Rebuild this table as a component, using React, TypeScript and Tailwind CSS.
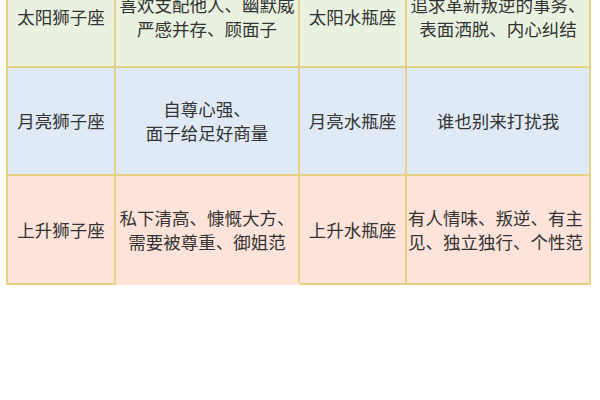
import React from 'react';

const rows = [
  {
    bg: 'bg-[#e9f2e0]',
    h: 'h-[100px]',
    cells: ['太阳狮子座', ['喜欢支配他人、幽默威', '严感并存、顾面子'], '太阳水瓶座', ['追求革新叛逆的事务、', '表面洒脱、内心纠结']],
  },
  {
    bg: 'bg-[#e0eaf6]',
    h: 'h-[108px]',
    cells: ['月亮狮子座', ['自尊心强、', '面子给足好商量'], '月亮水瓶座', ['谁也别来打扰我']],
  },
  {
    bg: 'bg-[#fde3d9]',
    h: 'h-[109px]',
    cells: ['上升狮子座', ['私下清高、慷慨大方、', '需要被尊重、御姐范'], '上升水瓶座', ['有人情味、叛逆、有主', '见、独立独行、个性范']],
  },
];

export default function App() {
  return (
    <div
      className="w-[600px] h-[400px] overflow-hidden bg-white text-[#333333]"
      style={{ fontFamily: '"Noto Sans CJK SC", "Noto Sans", sans-serif' }}
    >
      <table className="mt-[-34px] ml-[6px] w-[583px] table-fixed border-collapse text-[17.5px] leading-[24px]">
        <colgroup>
          <col className="w-[108px]" />
          <col className="w-[184px]" />
          <col className="w-[107px]" />
          <col className="w-[184px]" />
        </colgroup>
        <tbody>
          {rows.map((row, ri) => (
            <tr key={ri} className={`${row.bg} ${row.h}`}>
              {row.cells.map((cell, ci) => (
                <td
                  key={ci}
                  className={`border-2 border-[#e8d184] p-0 align-middle ${
                    ci === 3 && ri === 2 ? 'text-left pl-[1px]' : 'text-center'
                  } ${ri === 2 && ci === 1 ? 'border-b-[#fde3d9]' : ''}`}
                >
                  {Array.isArray(cell) ? (
                    cell.map((line, li) => (
                      <div key={li} className="whitespace-nowrap">
                        {line}
                      </div>
                    ))
                  ) : (
                    <span className="whitespace-nowrap">{cell}</span>
                  )}
                </td>
              ))}
            </tr>
          ))}
        </tbody>
      </table>
    </div>
  );
}
